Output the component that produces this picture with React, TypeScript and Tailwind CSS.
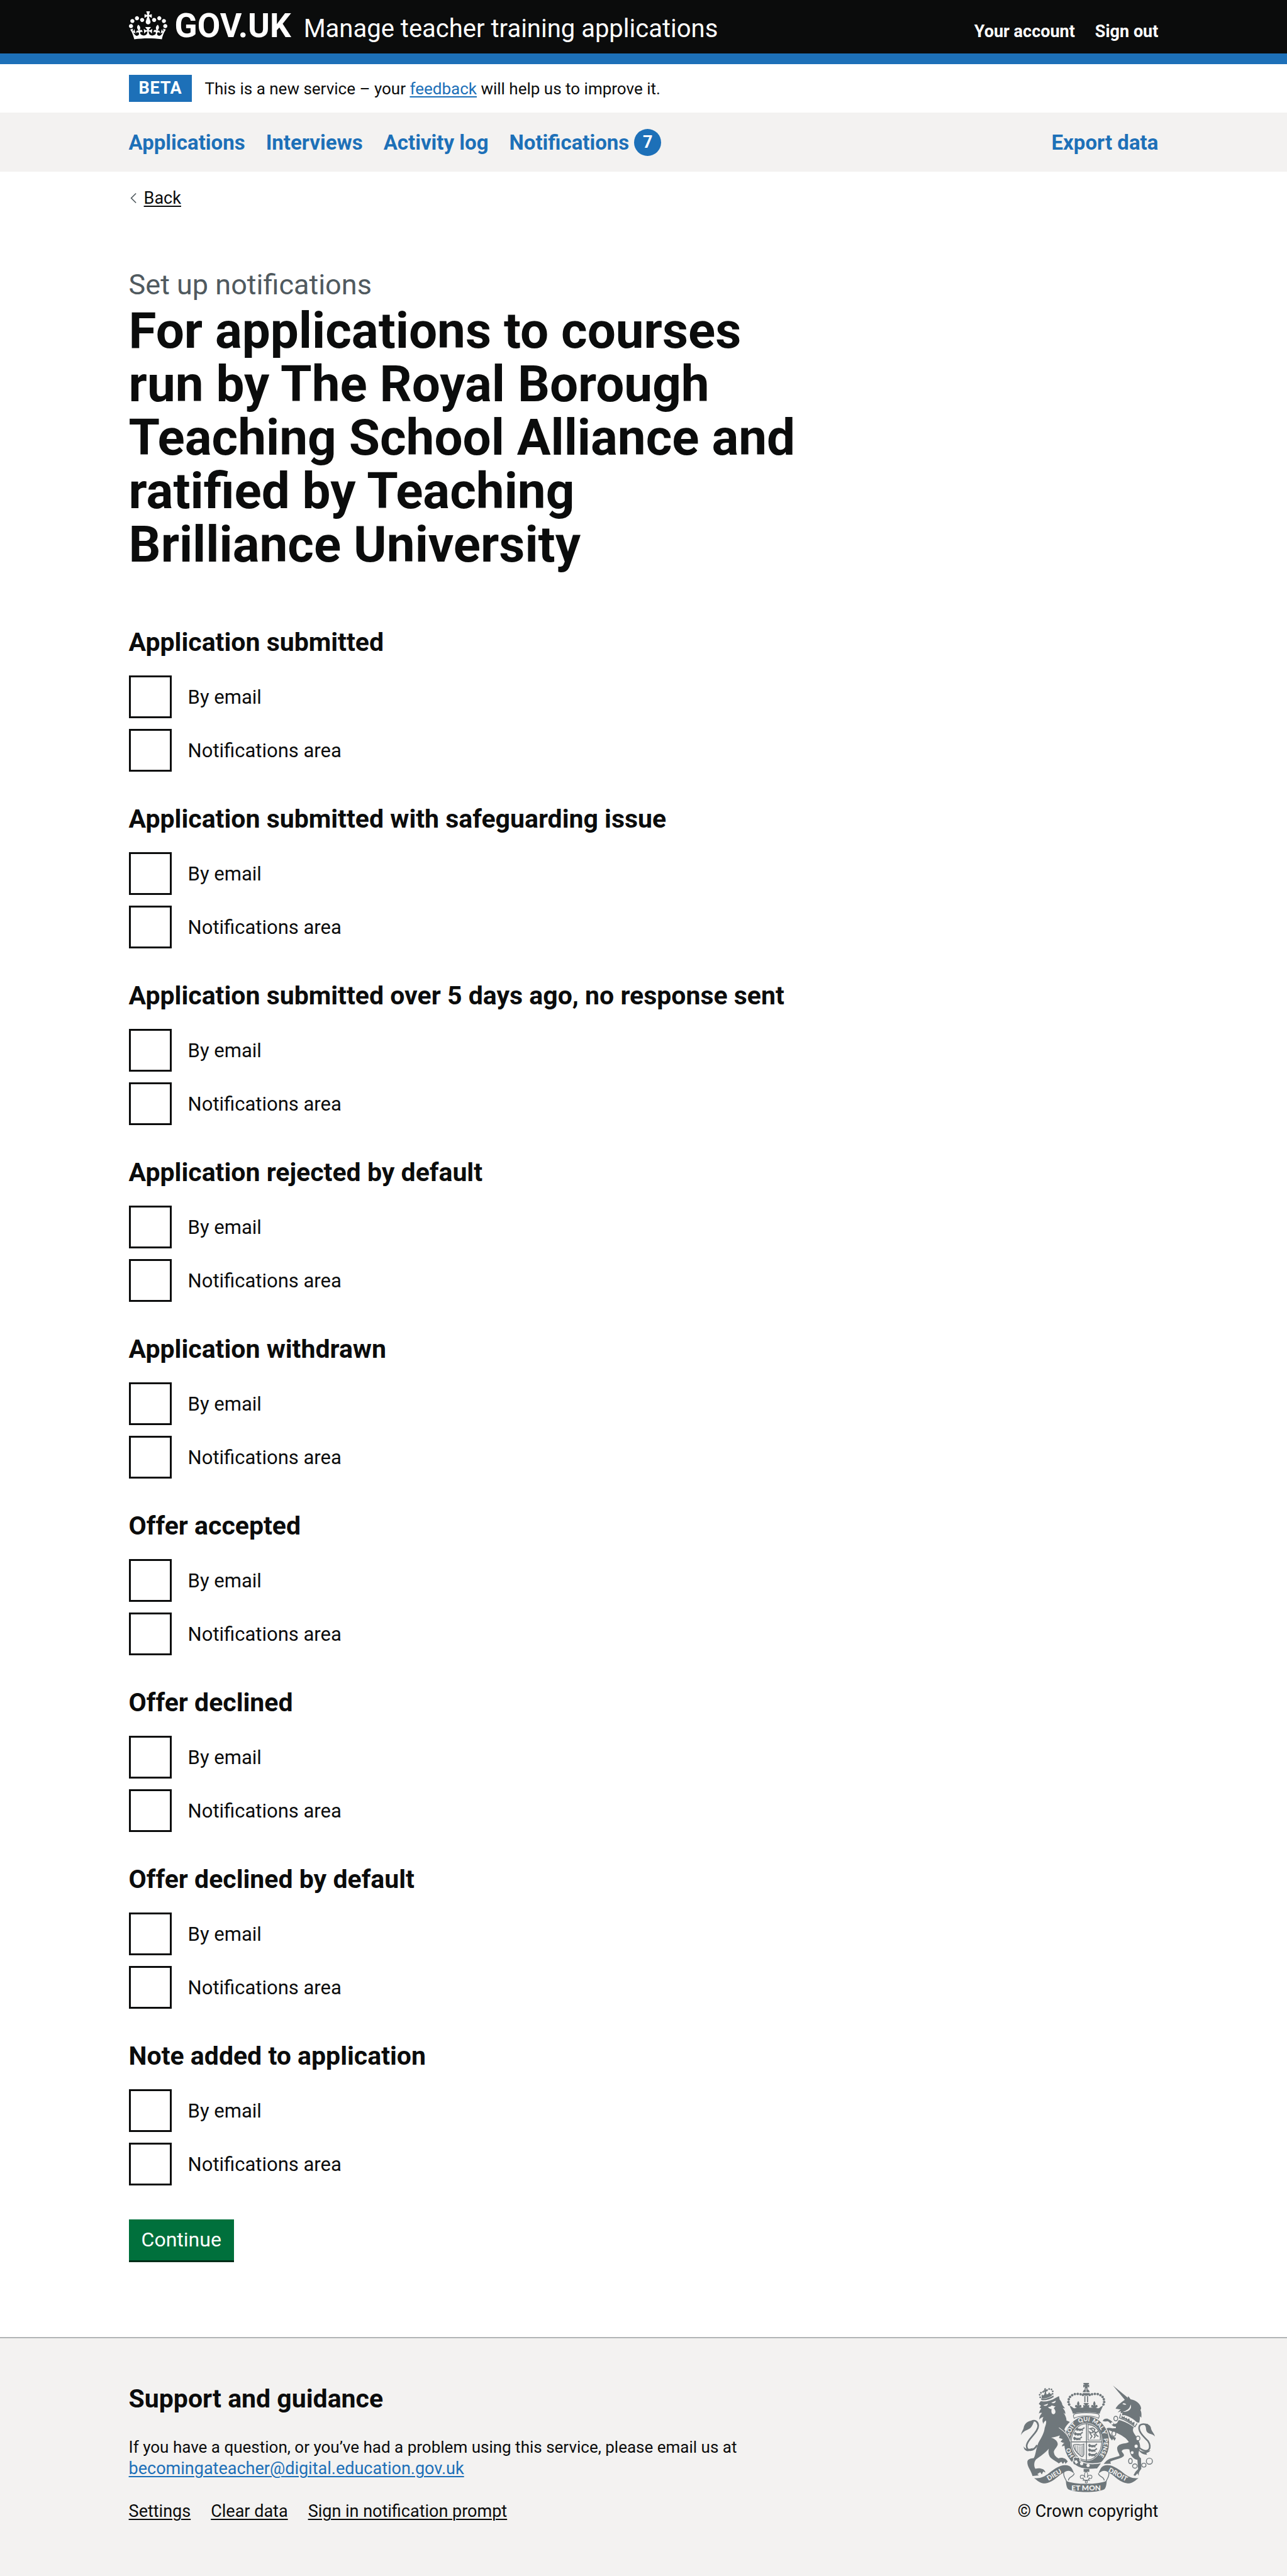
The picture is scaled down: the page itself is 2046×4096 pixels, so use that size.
const events = [
  "Application submitted",
  "Application submitted with safeguarding issue",
  "Application submitted over 5 days ago, no response sent",
  "Application rejected by default",
  "Application withdrawn",
  "Offer accepted",
  "Offer declined",
  "Offer declined by default",
  "Note added to application",
];

const channels = ["By email", "Notifications area"];

function Crown() {
  return (
    <svg viewBox="0 0 132 97" className="mt-0.5 h-[45px] w-[61px] self-start" fill="currentColor" aria-hidden="true">
      <path
        fillRule="evenodd"
        d="M25 30.2c3.5 1.5 7.7-.2 9.1-3.7 1.5-3.6-.2-7.8-3.9-9.2-3.6-1.4-7.6.3-9.1 3.9-1.4 3.5.3 7.5 3.9 9zM9 39.5c3.6 1.5 7.8-.2 9.2-3.7 1.5-3.6-.2-7.8-3.9-9.1-3.6-1.5-7.6.2-9.1 3.8-1.4 3.5.3 7.5 3.8 9zM4.4 57.2c3.5 1.5 7.7-.2 9.1-3.8 1.5-3.6-.2-7.7-3.9-9.1-3.5-1.5-7.6.3-9.1 3.8-1.4 3.5.3 7.6 3.9 9.1zm38.3-21.4c3.5 1.5 7.7-.2 9.1-3.8 1.5-3.6-.2-7.7-3.9-9.1-3.6-1.5-7.6.3-9.1 3.8-1.3 3.6.4 7.7 3.9 9.1zm64.4-5.6c-3.6 1.5-7.8-.2-9.1-3.7-1.5-3.6.2-7.8 3.8-9.2 3.6-1.4 7.7.3 9.2 3.9 1.3 3.5-.4 7.5-3.9 9zm15.9 9.3c-3.6 1.5-7.7-.2-9.1-3.7-1.5-3.6.2-7.8 3.7-9.1 3.6-1.5 7.7.2 9.2 3.8 1.5 3.5-.3 7.5-3.8 9zm4.7 17.7c-3.6 1.5-7.8-.2-9.2-3.8-1.5-3.6.2-7.7 3.9-9.1 3.6-1.5 7.7.3 9.2 3.8 1.3 3.5-.4 7.6-3.9 9.1zM89.3 35.8c-3.6 1.5-7.8-.2-9.2-3.8-1.4-3.6.2-7.7 3.9-9.1 3.6-1.5 7.7.3 9.2 3.8 1.4 3.6-.3 7.7-3.9 9.1zM69.7 17.7l8.9 4.7V9.3l-8.9 2.8c-.2-.3-.5-.6-.9-.9L72.4 0H59.6l3.5 11.2c-.3.3-.6.5-.9.9l-8.8-2.8v13.1l8.8-4.7c.3.3.6.7.9.9l-5 15.4v.1c-.2.8-.4 1.6-.4 2.4 0 4.1 3.1 7.5 7 8.1h.2c.3 0 .7.1 1 .1.4 0 .7 0 1-.1h.2c4-.6 7.1-4.1 7.1-8.1 0-.8-.1-1.7-.4-2.4V34l-5.1-15.4c.4-.2.7-.6 1-.9zM66 92.8c16.9 0 32.8 1.1 47.1 3.2 4-16.9 8.9-26.7 14-33.5l-9.6-3.4c1 4.9 1.1 7.2 0 10.2-1.5-1.4-3-4.3-4.2-8.7L108.6 76c2.8-2 5-3.2 7.5-3.3-4.4 9.4-10 11.9-13.6 11.2-4.3-.8-6.3-4.6-5.6-7.9 1-4.7 5.7-5.9 8-.5 4.3-8.7-3-11.4-7.6-8.8 7.1-7.2 7.9-13.5 2.1-21.1-8 6.1-8.1 12.3-4.5 20.8-4.7-5.4-12.1-2.5-9.5 6.2 3.4-5.2 7.9-2 7.2 3.1-.6 4.3-6.4 7.8-13.5 7.2-10.3-.9-10.9-8-11.2-13.8 2.5-.5 7.1 1.8 11 7.3L80.2 60c-4.1 4.4-8 5.3-12.3 5.4 1.4-4.4 8-11.6 8-11.6H55.5s6.4 7.2 7.9 11.6c-4.2-.1-8-1-12.3-5.4l1.4 16.4c3.9-5.5 8.5-7.7 10.9-7.3-.3 5.8-.9 12.8-11.1 13.8-7.2.6-12.9-2.9-13.5-7.2-.7-5 3.8-8.3 7.1-3.1 2.7-8.7-4.6-11.6-9.4-6.2 3.7-8.5 3.6-14.7-4.6-20.8-5.8 7.6-5 13.9 2.2 21.1-4.7-2.6-11.9.1-7.7 8.8 2.3-5.5 7.1-4.2 8.1.5.7 3.3-1.3 7.1-5.7 7.9-3.5.7-9-1.8-13.5-11.2 2.5.1 4.7 1.3 7.5 3.3l-4.7-15.4c-1.2 4.4-2.7 7.2-4.3 8.7-1.1-3-.9-5.3 0-10.2l-9.5 3.4c5 6.9 9.9 16.7 14 33.5 14.8-2.1 30.8-3.2 47.7-3.2z"
      />
    </svg>
  );
}

const INK = "#6f777b";
const PAPER = "#f3f2f1";

const crownBeads = [
  [479, 187], [466, 183], [450, 181], [434, 182], [419, 188], [407, 198], [400, 211], [398, 226], [402, 240],
];
const lionBeads = [
  [240, 200], [237, 186], [244, 175], [256, 170], [278, 160], [290, 154], [303, 156], [310, 167], [309, 181],
];

function FleurDeLis({ x, y }: { x: number; y: number }) {
  return (
    <path
      transform={`translate(${x} ${y})`}
      d="M0-22C7-12 9-5 3 6C8-2 18-2 18 8C18 14 12 16 8 12C8 20 14 24 22 26H-22C-14 24-8 20-8 12C-12 16-18 14-18 8C-18-2-8-2-3 6C-9-5-7-12 0-22Z"
    />
  );
}

function Passant({ x, y }: { x: number; y: number }) {
  return (
    <path
      transform={`translate(${x} ${y})`}
      d="M2 2L8-3L14 2L18 3H36C42 2 44-3 50-6M34 4L40 12M30 5L26 12M18 4L22 12M14 5L6 10M10 2L3 7"
      fill="none"
      stroke={INK}
      strokeWidth="7"
    />
  );
}

function RoyalArms() {
  return (
    <svg viewBox="132 120 750 612" className="h-[174px] w-[213px]" fill={INK} role="img" aria-label="Royal coat of arms">
      {/* Lion */}
      <path d="M244 206C262 212 290 206 313 190L316 198C292 214 268 219 247 216Z" />
      <path d="M248 184L256 190L263 184L266 170L258 168L257 160L264 162L262 151L272 149L271 159L279 157L280 166L272 168L275 184L284 182L290 172L297 181L303 180L306 190C290 202 266 208 248 206Z" />
      {lionBeads.map(([x, y]) => (
        <circle key={`${x}-${y}`} cx={x} cy={y} r="5" />
      ))}
      <path d="M232 237L243 222C270 226 300 220 328 202L345 194L349 213C357 222 363 233 364 243L379 262L366 260C375 271 383 283 380 294L370 286C380 300 388 316 387 330L406 338C393 350 382 364 375 380C390 398 404 420 409 442C413 458 411 470 403 483L397 468L386 483L381 468L360 474L371 456L354 449L366 434L345 428L350 414C332 420 316 424 301 426C322 433 340 447 338 465C335 480 318 492 316 506C318 524 328 534 342 542C362 534 386 542 394 560L381 573L377 560L367 573L358 561L344 570C332 560 300 546 292 530C285 516 285 503 288 488C272 508 240 532 216 548C203 565 205 588 213 600C237 594 266 600 269 621L257 615L249 632L240 620L224 630L233 637L197 641C188 606 166 590 168 560C172 543 190 542 204 540C216 520 217 482 231 452C250 420 262 398 265 372C270 356 276 344 272 330C262 336 257 342 259 350C250 336 252 322 258 310C248 312 238 318 235 326C234 308 242 298 250 288C242 286 236 288 232 292C236 278 240 270 246 262L236 258L244 247Z" />
      <g fill={PAPER}>
        <path d="M258 245L284 236C284 246 268 252 258 245ZM302 231L327 219C328 230 314 238 302 231Z" />
        <path d="M284 256C292 250 298 256 302 247C312 245 316 252 326 250C320 256 318 258 316 262C326 270 330 288 318 294C304 298 300 282 304 266C296 266 290 262 284 256Z" />
      </g>
      <path d="M222 468C205 502 162 508 164 470C168 432 230 398 229 358C227 336 212 326 192 334" fill="none" stroke={INK} strokeWidth="9" />
      <path d="M205 330C178 328 152 342 147 372C143 386 136 392 132 412C147 386 162 388 180 376C194 366 198 352 204 338ZM147 474C155 490 170 492 200 484C190 500 168 506 160 498C152 494 148 486 147 474Z" />

      {/* Unicorn */}
      <path d="M647 134L732 204L716 217Z" />
      <path d="M662 264C666 250 690 230 708 218C716 212 722 210 728 208L733 194L746 211C776 215 802 236 805 262L801 272C808 284 807 298 806 314L797 306C799 320 797 330 794 342L782 341C764 322 736 306 712 300L698 300L700 286L690 290L692 278L674 284L690 268Z" />
      <g fill={PAPER}>
        <path d="M700 238C706 230 714 232 722 240C714 244 706 242 700 238Z" />
        <path d="M746 240C756 264 736 282 702 282C722 274 742 266 746 240Z" />
      </g>
      <path d="M690 294L684 316C715 326 742 342 770 365L782 346" fill="none" stroke={INK} strokeWidth="5" />
      <path d="M694 316L697 302L704 312L712 306L715 318L724 314L728 325L738 318L742 334L752 330L754 342L768 338L766 358C744 340 720 324 694 316Z" />
      <path d="M680 327C712 334 742 350 764 368C754 382 760 396 772 412C792 438 802 464 799 486C788 508 786 530 804 541L806 600C798 612 788 622 792 640L784 626L772 640L762 636L774 616L788 602L784 550C762 546 744 530 739 492C716 488 700 492 696 502C700 512 714 520 707 530C690 546 650 550 632 561L636 572L595 573C606 560 616 550 630 544L684 528C684 516 668 502 671 481C680 455 722 462 736 451C724 430 700 416 680 406C668 398 662 380 664 360C668 346 674 336 680 327Z" />
      <path d="M684 360C664 368 646 366 640 352L622 336C612 332 606 338 590 334C592 322 604 318 618 320C630 326 648 338 656 350L672 344ZM690 404C660 402 640 390 624 384C626 396 634 408 642 416L664 428L656 444L648 432L642 442L630 426C620 412 606 396 606 378C612 370 632 370 644 374L672 372Z" />
      <g fill="none" stroke={INK} strokeWidth="5">
        <ellipse cx="663" cy="319" rx="11" ry="13" />
        <ellipse cx="652" cy="404" rx="11" ry="14" fill={PAPER} />
        <ellipse cx="787" cy="430" rx="11" ry="13" fill={PAPER} />
        <ellipse cx="745" cy="557" rx="10" ry="14" />
        <ellipse cx="770" cy="585" rx="13" ry="12" />
        <ellipse cx="820" cy="580" rx="12" ry="11" />
        <circle cx="851" cy="558" r="17" />
      </g>
      <g fill={PAPER}>
        <circle cx="777" cy="474" r="9" />
        <circle cx="755" cy="510" r="8" />
        <circle cx="643" cy="346" r="7" />
      </g>
      <path d="M796 484C850 524 866 478 844 446C816 418 782 386 797 358C808 346 824 350 842 354" fill="none" stroke={INK} strokeWidth="9" />
      <path d="M820 350C842 344 860 358 861 378C866 394 878 402 883 420C868 402 850 408 838 394C828 380 838 366 820 350ZM786 484C796 500 812 508 838 502L858 496C850 506 844 508 834 512L838 522C816 522 794 508 786 484Z" />

      {/* Garter and shield */}
      <ellipse cx="500" cy="452" rx="128" ry="148" stroke={PAPER} strokeWidth="5" />
      <ellipse cx="499" cy="450" rx="90" ry="107" fill={PAPER} />
      <ellipse cx="499" cy="450" rx="85" ry="102" fill="none" stroke={INK} strokeWidth="4" />
      <path d="M499 346V556M413 450H585" stroke={INK} strokeWidth="5" />
      <path d="M508 354V440H576V400C566 376 546 358 508 354Z" fill="none" stroke={INK} strokeWidth="4" />
      <path d="M520 432L530 418L522 408L516 394L526 400L536 396L530 382L518 376L534 372L546 380L540 392L554 398L564 390M546 398L556 414L566 420M540 404L548 418L540 430" fill="none" stroke={INK} strokeWidth="6" />
      <Passant x={438} y={376} />
      <Passant x={428} y={402} />
      <Passant x={424} y={428} />
      <Passant x={508} y={468} />
      <Passant x={508} y={493} />
      <Passant x={508} y={518} />
      <path d="M426 468C446 456 462 476 484 462V520C480 534 470 534 466 528C450 516 430 500 426 468Z" fill="none" stroke={INK} strokeWidth="5" />
      <path d="M438 470V500M448 471V512M458 474V520M468 474V526M476 470V526" stroke={INK} strokeWidth="3" />
      <path id="garter" d="M499 562A97 114 0 0 1 499 334A97 114 0 0 1 499 562" fill="none" />
      <g fill={PAPER} fontFamily="Lato, sans-serif" fontWeight="900" fontSize="33" textAnchor="middle">
        <text><textPath href="#garter" startOffset="16%">HO</textPath></text>
        <text><textPath href="#garter" startOffset="35%">SOIT</textPath></text>
        <text><textPath href="#garter" startOffset="48%">QUI</textPath></text>
        <text><textPath href="#garter" startOffset="62%">MAL Y</textPath></text>
        <text><textPath href="#garter" startOffset="80%">PENSE</textPath></text>
      </g>
      <path d="M428 552C420 540 434 528 446 538C458 528 466 546 462 556C500 576 540 576 586 566L560 600C510 606 462 600 436 580C420 576 418 560 428 552Z" stroke={PAPER} strokeWidth="5" />
      <g fill={PAPER}>
        <circle cx="472" cy="571" r="9" />
        <circle cx="508" cy="582" r="9" />
        <path d="M430 556L444 552L452 566L440 574Z" />
      </g>
      <path
        d="M350 420L372 432L356 448L374 456L364 474L384 468L388 482L399 468L405 482C414 462 408 436 392 408L374 392Z"
      />
      <path d="M345 370C374 390 402 420 408 448" fill="none" stroke={PAPER} strokeWidth="4" />

      {/* Imperial crown */}
      <path d="M482 120H513V126L503 132L514 129V145L503 141L508 152H487L492 141L481 145V129L492 132L482 126Z" />
      <path d="M478 172C480 160 488 154 497 154C508 154 515 160 517 172ZM477 177H518C516 188 508 192 497 192C487 192 480 188 477 177Z" />
      <path d="M497 154V174" stroke={PAPER} strokeWidth="3" />
      <path d="M490 194V228M505 194V228" stroke={INK} strokeWidth="6" />
      {crownBeads.map(([x, y]) => (
        <g key={`${x}-${y}`}>
          <circle cx={x} cy={y} r="7" />
          <circle cx={996 - x} cy={y} r="7" />
        </g>
      ))}
      <path d="M404 246L420 254C424 262 436 264 444 258L552 258C560 264 572 262 576 254L592 246C586 264 576 276 573 292C540 282 456 282 423 292C420 276 410 264 404 246Z" />
      <FleurDeLis x={453} y={243} />
      <FleurDeLis x={543} y={243} />
      <path d="M482 232H513L503 246L514 242V262H481V242L492 246Z" />
      <path d="M430 318C420 300 430 290 446 290C480 286 516 286 550 290C568 290 576 300 566 318C540 300 456 300 430 318Z" fill={PAPER} stroke={INK} strokeWidth="4" />

      {/* Motto ribbon */}
      <path d="M483 601H515V617C508 620 504 614 499 618C494 614 490 620 483 617Z" />
      <path d="M497 614C510 628 506 636 503 650C510 632 530 632 530 646C530 656 516 658 514 650C514 658 508 664 504 666H490C486 664 480 658 480 650C478 658 464 656 464 646C464 632 484 632 491 650C488 636 484 628 497 614ZM478 664H518" fill="none" stroke={INK} strokeWidth="4" />
      <circle cx="498" cy="674" r="6" fill="none" stroke={INK} strokeWidth="4" />
      <path d="M206 652C240 656 262 646 290 624C320 600 350 580 378 580C408 578 420 596 430 628C412 608 390 606 372 622C340 634 314 682 258 682C234 678 224 666 206 652Z" />
      <path d="M790 652C756 656 734 646 706 624C676 600 646 580 618 580C588 578 576 596 566 628C584 608 606 606 624 622C656 634 682 682 738 682C762 678 772 666 790 652Z" />
      <path d="M430 626C430 646 396 644 398 666M372 620C366 646 388 660 392 684M566 626C566 646 600 644 598 666M624 620C630 646 608 660 604 684" fill="none" stroke={INK} strokeWidth="5" />
      <path d="M384 668C430 690 566 690 612 668C612 690 606 710 598 716C560 736 436 736 398 716C390 710 384 690 384 668Z" />
      <g fill={PAPER} fontFamily="Lato, sans-serif" fontWeight="900" fontSize="42" textAnchor="middle">
        <text x="497" y="722">ET MON</text>
        <text transform="translate(325 645) rotate(-31)" fontSize="37">DIEU</text>
        <text transform="translate(669 643) rotate(29)" fontSize="37">DROIT</text>
      </g>
    </svg>
  );
}

const linkLine = "underline decoration-2 underline-offset-[3px]";

function Header() {
  return (
    <header className="bg-[#0b0c0c] text-white">
      <div className="mx-auto flex h-[85px] w-4/5 items-baseline pt-4">
        <a href="#home" className="flex items-baseline gap-3">
          <Crown />
          <span className="text-[53px] leading-[51px] font-bold">GOV.UK</span>
        </a>
        <a href="#service" className="ml-5 text-[40px] leading-[51px]">
          Manage teacher training applications
        </a>
        <nav aria-label="Account" className="ml-auto flex gap-8 text-[27px] leading-[34px] font-bold">
          <a href="#account">Your account</a>
          <a href="#sign-out">Sign out</a>
        </nav>
      </div>
      <div className="h-[17px] bg-[#1d70b8]" />
    </header>
  );
}

function PrimaryNav() {
  return (
    <nav aria-label="Primary" className="bg-[#f3f2f1] text-[33px] leading-[43px] font-bold text-[#1d70b8]">
      <div className="mx-auto flex h-[94px] w-4/5 items-center gap-[33px]">
        <a href="#applications">Applications</a>
        <a href="#interviews">Interviews</a>
        <a href="#activity">Activity log</a>
        <a href="#notifications" className="flex items-center gap-2">
          Notifications
          <span className="size-[43px] rounded-full bg-[#1d70b8] text-center text-[27px] text-white">7</span>
        </a>
        <a href="#export" className="ml-auto">Export data</a>
      </div>
    </nav>
  );
}

function EventGroup({ title, index }: { title: string; index: number }) {
  return (
    <fieldset className="mb-[50px]">
      <legend className="mb-[27px] text-[41px] leading-[51px] font-bold">{title}</legend>
      <div className="flex flex-col gap-[17px]">
        {channels.map((channel, i) => {
          const id = `event-${index}-${i}`;
          return (
            <div key={id} className="flex items-center gap-[26px]">
              <input id={id} type="checkbox" className="size-[68px] appearance-none border-3 border-[#0b0c0c] bg-white" />
              <label htmlFor={id} className="text-[31px] leading-[43px]">{channel}</label>
            </div>
          );
        })}
      </div>
    </fieldset>
  );
}

export default function App() {
  return (
    <div className="flex min-h-screen flex-col bg-white font-[Roboto,Arial,sans-serif] text-[#0b0c0c]">
      <Header />
      <div className="mx-auto flex h-[77px] w-4/5 items-center gap-5">
        <strong className="bg-[#1d70b8] px-4 text-[27px] leading-[43px] font-bold tracking-wide text-white">BETA</strong>
        <p className="text-[26px] leading-[34px]">
          This is a new service – your <a href="#feedback" className={`${linkLine} text-[#1d70b8]`}>feedback</a> will help us to improve it.
        </p>
      </div>
      <PrimaryNav />
      <div className="mx-auto w-4/5 pt-[25px]">
        <a href="#back" className="inline-flex items-center text-[27px] leading-[34px]">
          <svg viewBox="0 0 12 20" className="mr-3 ml-0.5 h-5 w-[10px]" fill="none" stroke="#505a5f" strokeWidth="2" aria-hidden="true">
            <path d="M11 1L2 10L11 19" />
          </svg>
          <span className={linkLine}>Back</span>
        </a>
        <main className="mt-[95px] w-2/3 pr-6 pb-[122px]">
          <span className="block text-[45px] leading-[51px] text-[#505a5f]">Set up notifications</span>
          <h1 className="mt-1.5 mb-[87px] text-[80px] leading-[85px] font-bold">
            For applications to courses run by The Royal Borough Teaching School Alliance and ratified by Teaching
            Brilliance{"\u00a0"}University
          </h1>
          <form onSubmit={(e) => e.preventDefault()}>
            {events.map((title, index) => (
              <EventGroup key={title} title={title} index={index} />
            ))}
            <button type="submit" className="mt-1 bg-[#00703c] px-5 py-[11px] text-[32px] leading-[43px] text-white shadow-[0_3px_0_#002d18]">
              Continue
            </button>
          </form>
        </main>
      </div>
      <footer className="grow border-t-2 border-[#b1b4b6] bg-[#f3f2f1]">
        <div className="mx-auto flex w-4/5 justify-between pt-[71px] pb-20 text-[27px] leading-[34px]">
          <div>
            <h2 className="mb-[34px] text-[41px] leading-[51px] font-bold">Support and guidance</h2>
            <p className="text-[26px]">
              If you have a question, or you’ve had a problem using this service, please email us at
            </p>
            <a href="mailto:becomingateacher@digital.education.gov.uk" className={`${linkLine} text-[#1d70b8]`}>
              becomingateacher@digital.education.gov.uk
            </a>
            <ul className="mt-[34px] flex gap-8">
              <li><a href="#settings" className={linkLine}>Settings</a></li>
              <li><a href="#clear" className={linkLine}>Clear data</a></li>
              <li><a href="#prompt" className={linkLine}>Sign in notification prompt</a></li>
            </ul>
          </div>
          <a href="#copyright" className="flex flex-col items-center justify-between">
            <RoyalArms />
            © Crown copyright
          </a>
        </div>
      </footer>
    </div>
  );
}
